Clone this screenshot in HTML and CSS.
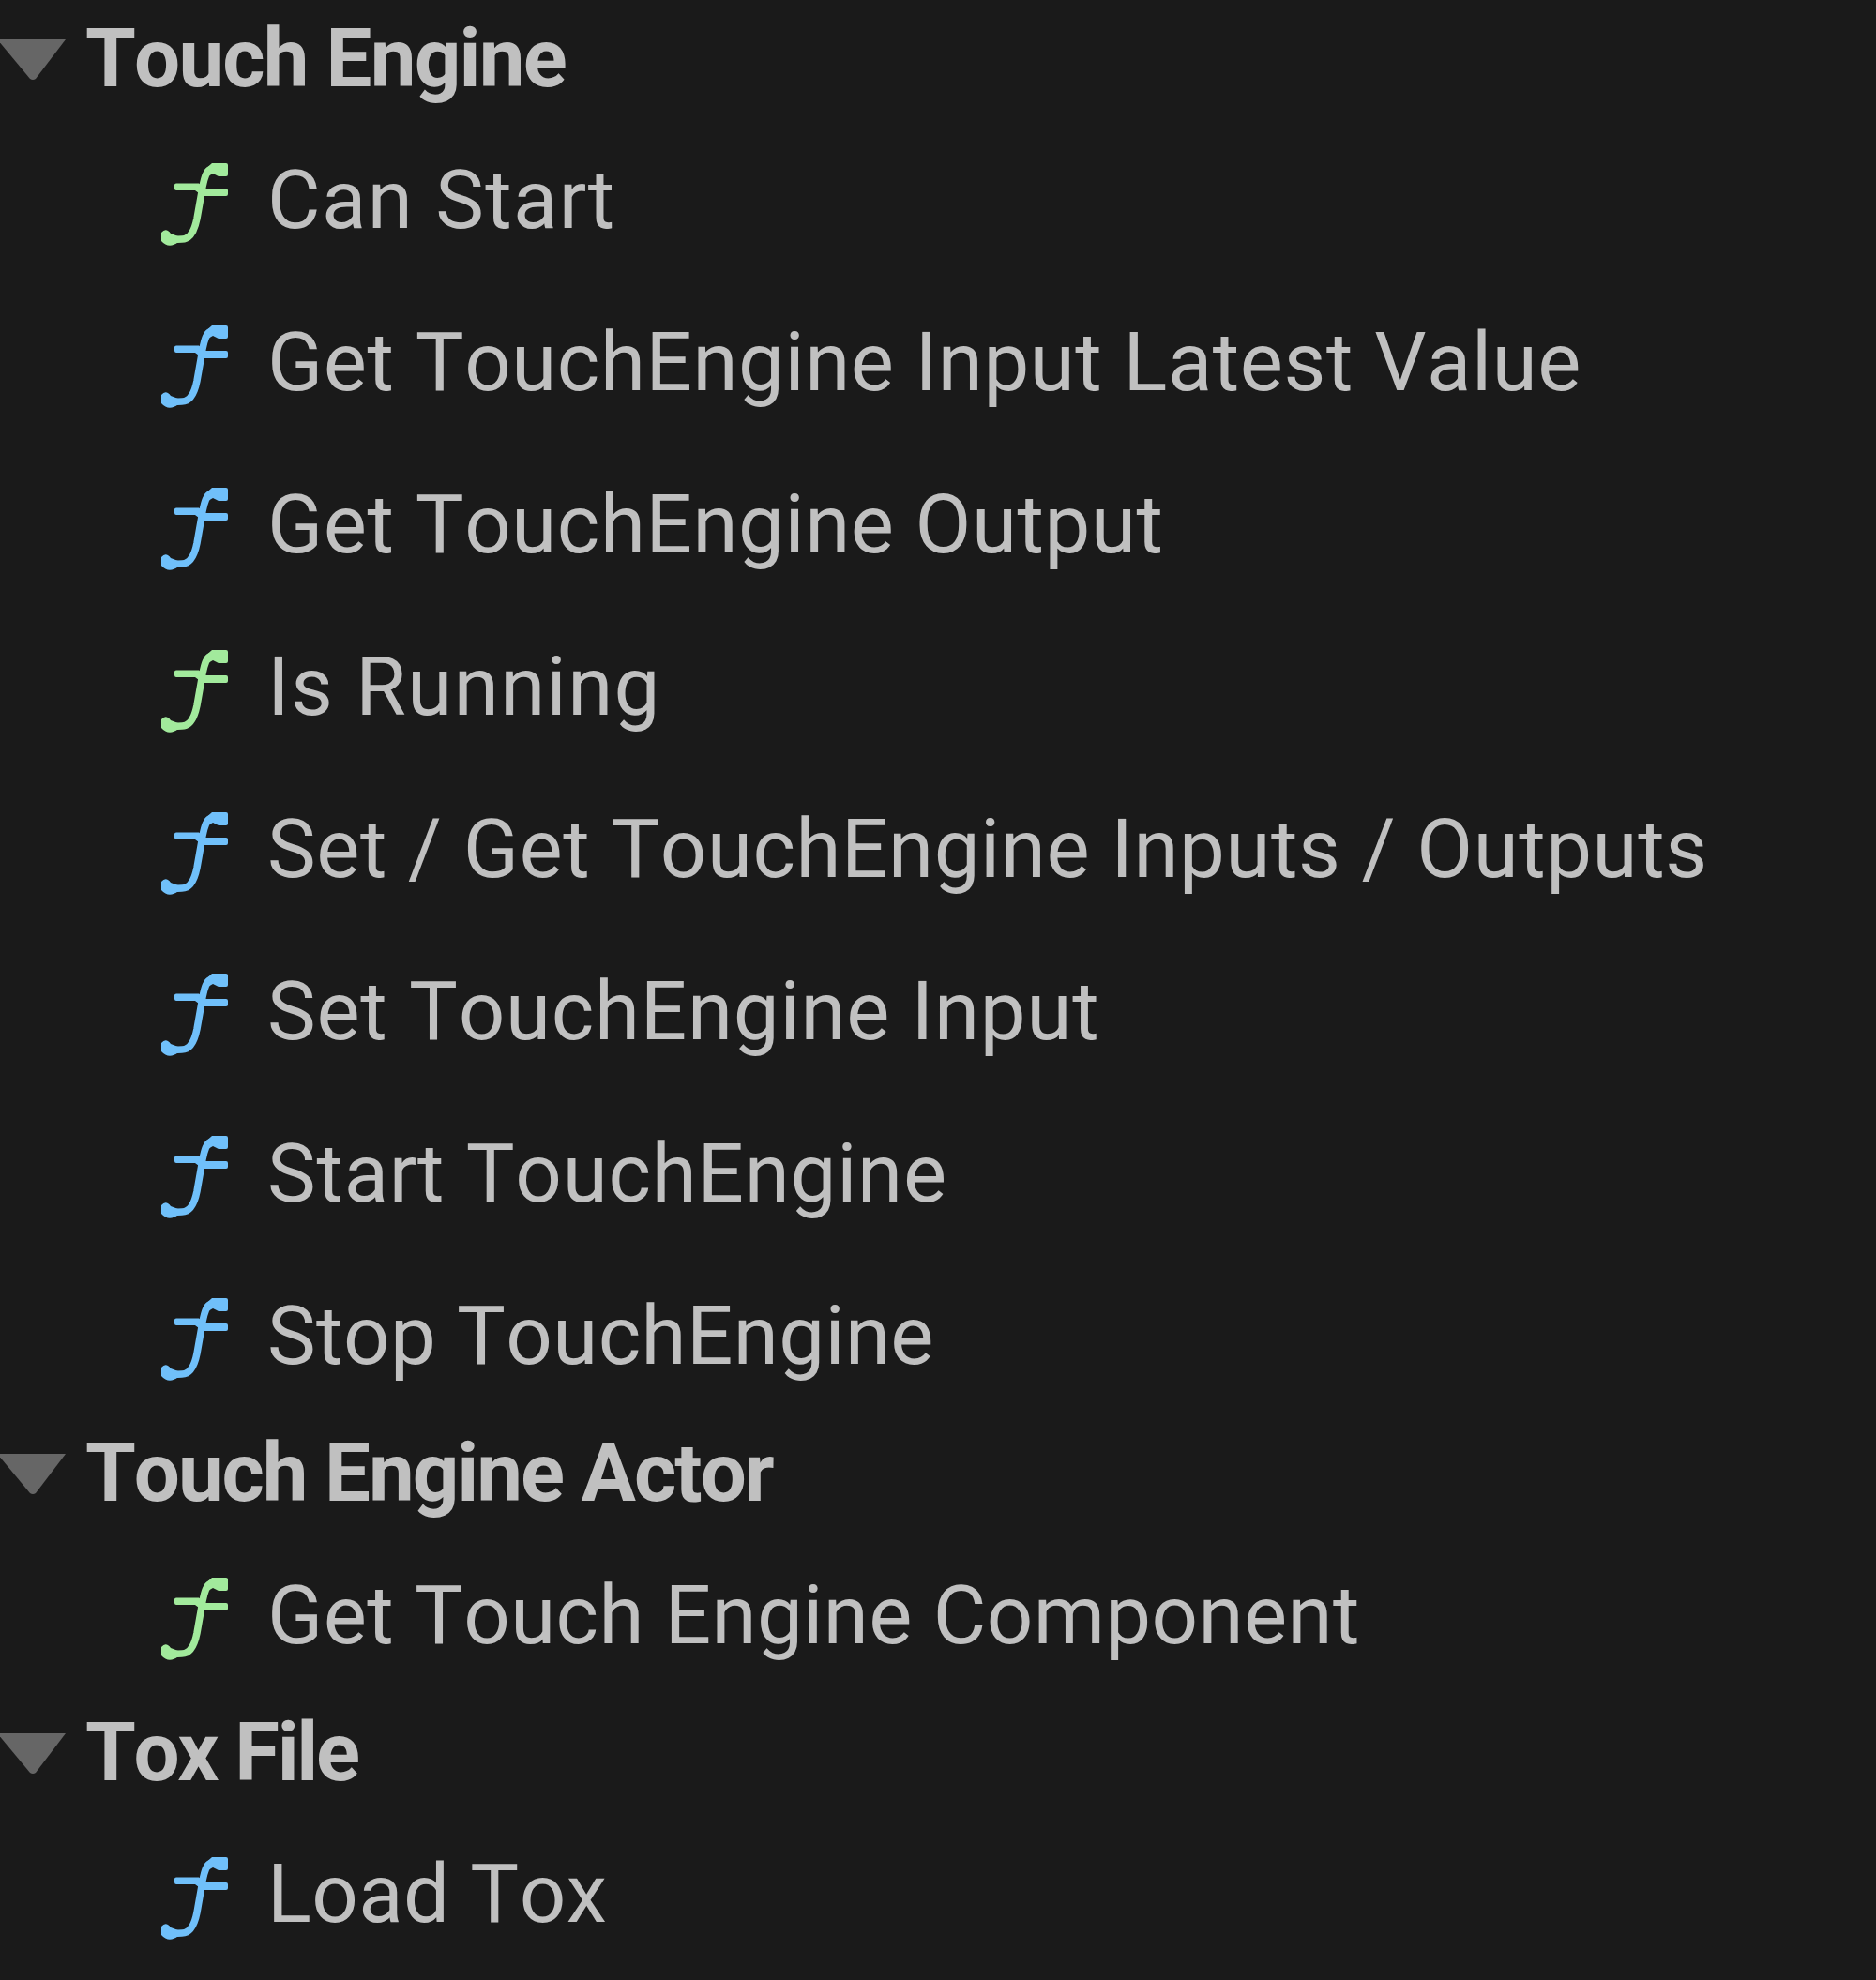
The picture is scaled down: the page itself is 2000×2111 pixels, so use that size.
FILE: index.html
```html
<!DOCTYPE html>
<html lang="en">
<head>
<meta charset="utf-8">
<title>Touch Engine functions</title>
<link rel="stylesheet" href="styles.css">
</head>
<body>
<svg class="defs" width="0" height="0" aria-hidden="true">
  <symbol id="fn" viewBox="0 0 120 130">
    <path d="M76 29C70 30 68 38 66 48L60 82C57 97 51 104 44 104C39 104 35 105 30 104" fill="none" stroke="currentColor" stroke-width="7.5"/>
    <path d="M38 44.500H62L69 50H91Q93 50 93 52V56Q93 58 91 58H66L58 52H38Q36 52 36 50V46Q36 44.500 38 44.500ZM76 23H91Q93 23 93 25V35Q93 37 91 37H83L77 34L70 38L67 31ZM22 97Q27 91 32 98L40 101V107Q30 115 22 106Z" fill="currentColor"/>
  </symbol>
  <symbol id="arrow" viewBox="0 0 80 50">
    <path d="M-3 3H70L38 45Q35 47 32 45Z" fill="currentColor"/>
  </symbol>
</svg>
<main class="tree">
  <section>
    <h2 class="category"><svg class="arrow"><use href="#arrow"/></svg><span>Touch Engine</span></h2>
    <ul>
      <li class="pure wide"><svg class="icon"><use href="#fn"/></svg><span>Can Start</span></li>
      <li><svg class="icon"><use href="#fn"/></svg><span>Get TouchEngine Input Latest Value</span></li>
      <li><svg class="icon"><use href="#fn"/></svg><span>Get TouchEngine Output</span></li>
      <li class="pure wide"><svg class="icon"><use href="#fn"/></svg><span>Is Running</span></li>
      <li><svg class="icon"><use href="#fn"/></svg><span>Set / Get TouchEngine Inputs / Outputs</span></li>
      <li class="relaxed"><svg class="icon"><use href="#fn"/></svg><span>Set TouchEngine Input</span></li>
      <li class="relaxed"><svg class="icon"><use href="#fn"/></svg><span>Start TouchEngine</span></li>
      <li class="snug"><svg class="icon"><use href="#fn"/></svg><span>Stop TouchEngine</span></li>
    </ul>
  </section>
  <section>
    <h2 class="category tight"><svg class="arrow"><use href="#arrow"/></svg><span>Touch Engine Actor</span></h2>
    <ul>
      <li class="pure snug"><svg class="icon"><use href="#fn"/></svg><span>Get Touch Engine Component</span></li>
    </ul>
  </section>
  <section>
    <h2 class="category tighter"><svg class="arrow"><use href="#arrow"/></svg><span>Tox File</span></h2>
    <ul>
      <li class="snug"><svg class="icon"><use href="#fn"/></svg><span>Load Tox</span></li>
    </ul>
  </section>
</main>
</body>
</html>
```
FILE: styles.css
```css
* { box-sizing: border-box; }
body {
  margin: 0;
  min-height: 2111px;
  background: #1a1a1a;
  color: #c0c0c0;
  font: 400 87px/100px Roboto, sans-serif;
  font-kerning: none;
  overflow: hidden;
}
.defs { position: absolute; }
.tree { padding-top: 2px; }

.category {
  display: flex;
  align-items: center;
  height: 125px;
  margin: 0;
  padding-bottom: 6px;
  font-size: inherit;
  font-weight: 700;
  letter-spacing: -1.8px;
}
.category.tight { letter-spacing: -2.05px; }
.category.tighter { letter-spacing: -2.4px; }
.arrow {
  flex: none;
  width: 80px;
  height: 50px;
  margin: 5px 11px 0 0;
  color: #666;
}

ul { margin: 0; padding: 0; list-style: none; }
li {
  display: flex;
  align-items: center;
  height: 172.9px;
  padding-left: 150px;
  letter-spacing: 0.56px;
  white-space: nowrap;
}
li.snug { letter-spacing: 0.38px; }
li.relaxed { letter-spacing: 0.78px; }
li.wide { letter-spacing: 1.4px; }
.icon {
  flex: none;
  width: 120px;
  height: 130px;
  margin: 5px 15px 0 0;
  color: #70c0fa;
}
.pure .icon { color: #a2ea9c; }
```
